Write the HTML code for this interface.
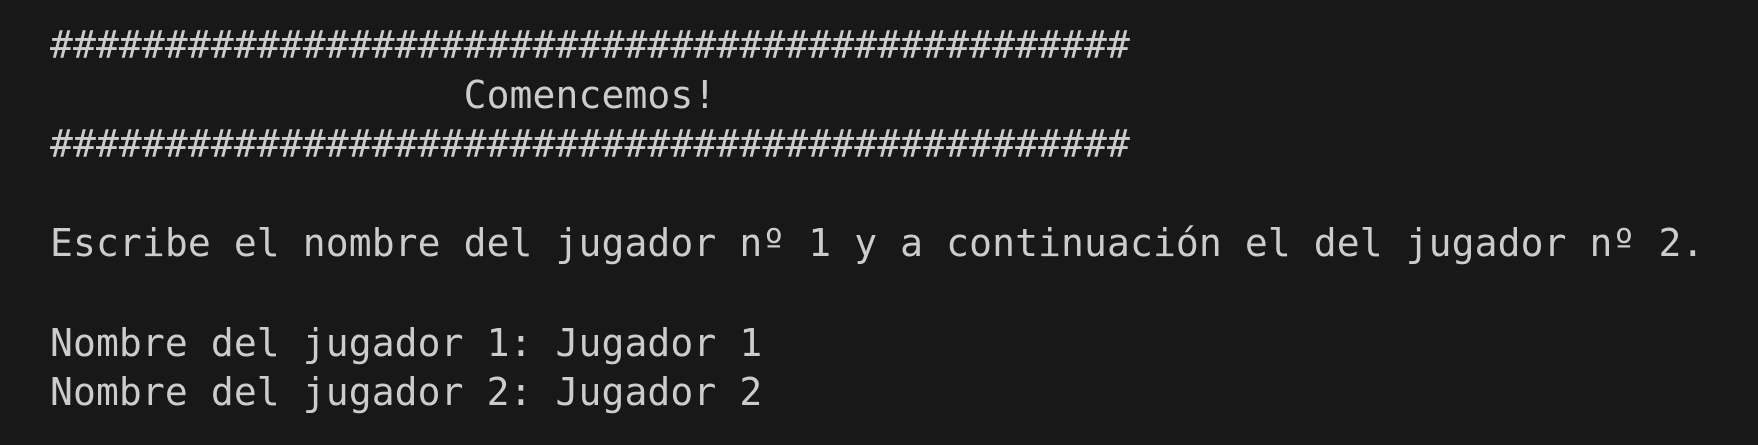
<!DOCTYPE html>
<html><head><style>
html,body{margin:0;padding:0;background:#181818;width:1758px;height:445px;overflow:hidden}
pre{margin:0;position:absolute;left:50px;top:21px;font-family:"DejaVu Sans Mono","Liberation Mono",monospace;font-size:38px;letter-spacing:0.1px;line-height:49.6px;color:#cccccc;white-space:pre}
</style></head><body>
<pre>###############################################
                  Comencemos!
###############################################

Escribe el nombre del jugador nº 1 y a continuación el del jugador nº 2.

Nombre del jugador 1: Jugador 1
Nombre del jugador 2: Jugador 2</pre>
</body></html>
